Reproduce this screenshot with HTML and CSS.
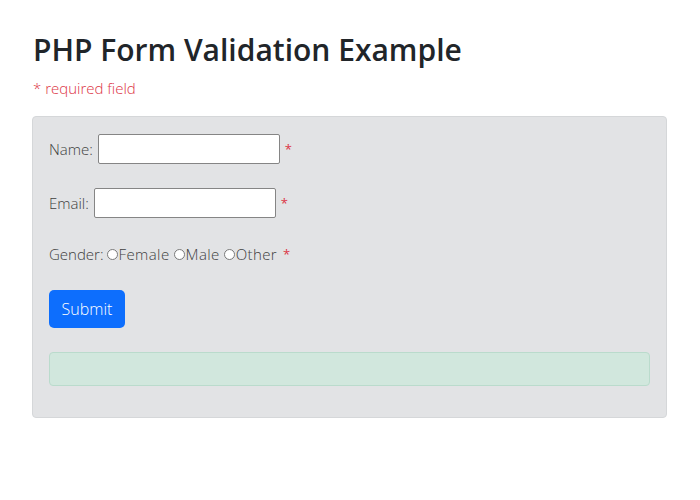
FILE: index.html
```html
<!DOCTYPE html>
<html>
<head>
<meta charset="utf-8">
<link rel="stylesheet" href="styles.css">
</head>
<body>
<div class="page">
  <h1 class="title">PHP Form Validation Example</h1>
  <p class="req">* required field</p>
  <div class="card">
    <div class="row"><span class="lbl">Name:</span><input class="field" type="text"><span class="star">*</span></div>
    <div class="row"><span class="lbl">Email:</span><input class="field" type="text"><span class="star">*</span></div>
    <div class="row gender"><span class="lbl">Gender:</span>
      <label class="opt"><span class="radio"></span>Female</label>
      <label class="opt"><span class="radio"></span>Male</label>
      <label class="opt"><span class="radio"></span>Other</label>
      <span class="star">*</span>
    </div>
    <div class="row btnrow"><button class="btn" type="button">Submit</button></div>
    <div class="result"></div>
  </div>
</div>
</body>
</html>
```

FILE: styles.css
```css
* { box-sizing: border-box; }
body {
  margin: 0;
  font-family: "Open Sans", "Noto Sans", sans-serif;
  color: #212529;
  background: #fff;
}
.page {
  padding: 31px 33px 0 32px;
}
.title {
  margin: 0 0 0 1px;
  font-size: 30px;
  font-weight: 600;
  line-height: 38px;
  color: #212529;
}
.req {
  margin: 8px 0 0 1px;
  font-size: 15px;
  font-weight: 300;
  line-height: 22px;
  color: #dc3545;
}
.card {
  margin-top: 17px;
  background: #e2e3e5;
  border: 1px solid #d5d7d9;
  border-radius: 4px;
  padding: 17px 16px 15px;
  display: flex;
  flex-direction: column;
  gap: 24px;
  font-size: 15px;
  font-weight: 300;
  color: #404040;
}
.row {
  display: flex;
  align-items: center;
  height: 30px;
}
.row.gender { height: 24px; }
.row.btnrow { height: 38px; }
.lbl { margin-right: 5px; }
.gender .lbl { margin-right: 3px; }
.field {
  width: 182px;
  height: 30px;
  border: 1px solid #858585;
  border-radius: 2px;
  background: #fff;
  padding: 0;
}
.star {
  color: #dc3545;
  margin-left: 5px;
  font-size: 13px;
  font-weight: 400;
}
.opt {
  display: flex;
  align-items: center;
  margin-right: 4px;
  letter-spacing: 0.4px;
}
.opt:last-of-type { margin-right: 1px; }
.radio {
  width: 11px;
  height: 11px;
  border: 1px solid #7a7a7a;
  border-radius: 50%;
  background: #fff;
  margin-right: 1px;
}
.btn {
  height: 38px;
  width: 76px;
  background: #0d6efd;
  color: #fff;
  border: none;
  border-radius: 5px;
  font-family: inherit;
  font-size: 16px;
  font-weight: 300;
  padding: 0;
}
.result {
  height: 34px;
  background: #d1e7dd;
  border: 1px solid #badbcc;
  border-radius: 4px;
  margin-bottom: 16px;
}
```
